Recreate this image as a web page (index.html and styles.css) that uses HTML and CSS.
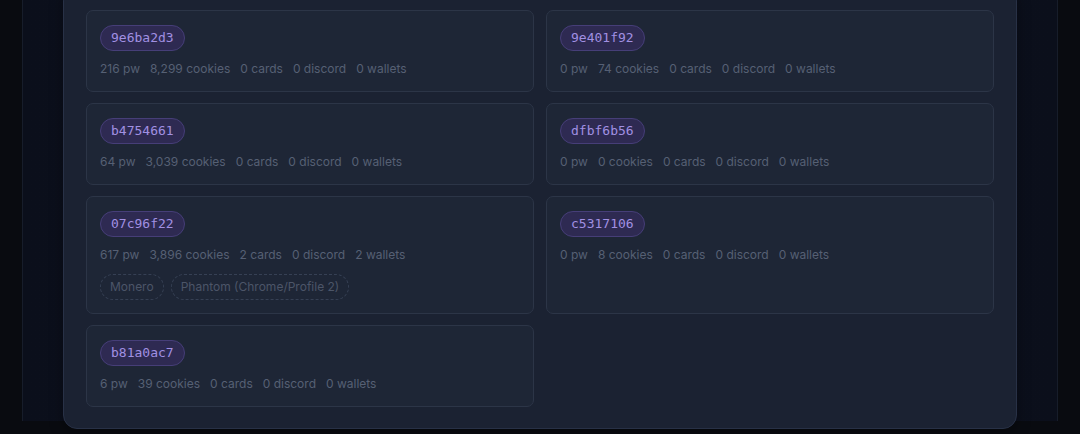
FILE: index.html
```html
<!DOCTYPE html>
<html lang="en">
<head>
    <meta charset="UTF-8">
    <meta name="viewport" content="width=device-width, initial-scale=1.0">
    <title>Sessions</title>
    <link rel="stylesheet" href="styles.css">
</head>
<body>

    <div class="shell">
        <div class="panel">
            <div class="grid">

                <div class="card">
                    <span class="hwid">9e6ba2d3</span>
                    <div class="stats">
                        <span>216 pw</span><span>8,299 cookies</span><span>0 cards</span><span>0 discord</span><span>0 wallets</span>
                    </div>
                </div>

                <div class="card">
                    <span class="hwid">9e401f92</span>
                    <div class="stats">
                        <span>0 pw</span><span>74 cookies</span><span>0 cards</span><span>0 discord</span><span>0 wallets</span>
                    </div>
                </div>

                <div class="card">
                    <span class="hwid">b4754661</span>
                    <div class="stats">
                        <span>64 pw</span><span>3,039 cookies</span><span>0 cards</span><span>0 discord</span><span>0 wallets</span>
                    </div>
                </div>

                <div class="card">
                    <span class="hwid">dfbf6b56</span>
                    <div class="stats">
                        <span>0 pw</span><span>0 cookies</span><span>0 cards</span><span>0 discord</span><span>0 wallets</span>
                    </div>
                </div>

                <div class="card">
                    <span class="hwid">07c96f22</span>
                    <div class="stats">
                        <span>617 pw</span><span>3,896 cookies</span><span>2 cards</span><span>0 discord</span><span>2 wallets</span>
                    </div>
                    <div class="tags">
                        <span class="tag">Monero</span>
                        <span class="tag">Phantom (Chrome/Profile 2)</span>
                    </div>
                </div>

                <div class="card">
                    <span class="hwid">c5317106</span>
                    <div class="stats">
                        <span>0 pw</span><span>8 cookies</span><span>0 cards</span><span>0 discord</span><span>0 wallets</span>
                    </div>
                </div>

                <div class="card">
                    <span class="hwid">b81a0ac7</span>
                    <div class="stats">
                        <span>6 pw</span><span>39 cookies</span><span>0 cards</span><span>0 discord</span><span>0 wallets</span>
                    </div>
                </div>

            </div>
        </div>
    </div>

</body>
</html>
```

FILE: styles.css
```css
body {
    font-family: Inter, "Noto Sans", sans-serif;
    background-color: #090b10;
    margin: 0;
    height: 434px;
    overflow: hidden;
}

.shell {
    margin: 0 22px;
    height: 100%;
    padding: 0 40px;
    background: linear-gradient(90deg, #0b0f1b, #0d1120 50%, #0b0f1b);
    border-left: 1px solid #171d2a;
    border-right: 1px solid #171d2a;
}

.panel {
    margin-top: -13px;
    padding: 22px 22px 21px;
    background-color: #1b2232;
    border: 1px solid #283146;
    border-radius: 14px;
    box-shadow: 0 4px 14px rgba(0, 0, 0, 0.35);
}

.grid {
    display: grid;
    grid-template-columns: 1fr 1fr;
    gap: 11px 12px;
    align-items: stretch;
}

.card {
    padding: 14px 13px 13px;
    background-color: #1e2636;
    border: 1px solid #2c3547;
    border-radius: 7px;
}

.hwid {
    display: inline-block;
    height: 24px;
    line-height: 24px;
    padding: 0 10px;
    font-family: "DejaVu Sans Mono", monospace;
    font-size: 13px;
    color: #a190e2;
    background-color: #2e2a52;
    border: 1px solid #463e78;
    border-radius: 13px;
}

.stats {
    display: flex;
    gap: 10px;
    margin-top: 9px;
    font-size: 12px;
    line-height: 18px;
    color: #566074;
}

.tags {
    display: flex;
    gap: 7px;
    margin-top: 10px;
}

.tag {
    height: 24px;
    line-height: 24px;
    padding: 0 9px;
    font-size: 12px;
    color: #4c5568;
    border: 1px dashed #364054;
    border-radius: 13px;
}
```
